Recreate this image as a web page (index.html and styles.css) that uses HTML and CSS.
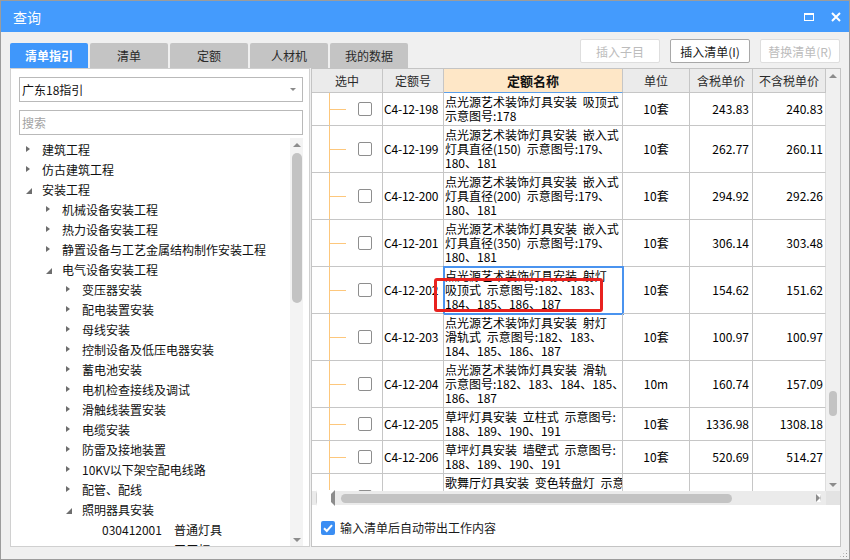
FILE: index.html
```html
<!DOCTYPE html>
<html lang="zh-CN">
<head>
<meta charset="UTF-8">
<title>查询</title>
<link rel="stylesheet" href="styles.css">
</head>
<body>
    <div class="window">
        <div class="titlebar">
            <span class="title">查询</span>
            <span class="win-btn"><span class="max-icon"></span></span>
            <span class="win-btn">
                <svg width="10" height="10" viewBox="0 0 10 10"><path d="M1 1 L9 9 M9 1 L1 9" stroke="#fff" stroke-width="2"/></svg>
            </span>
        </div>

        <div class="toolbar">
            <div class="tabs">
                <div class="tab on">清单指引</div>
                <div class="tab">清单</div>
                <div class="tab">定额</div>
                <div class="tab">人材机</div>
                <div class="tab">我的数据</div>
            </div>
            <div class="actions">
                <div class="btn">插入子目</div>
                <div class="btn on">插入清单(I)</div>
                <div class="btn">替换清单(R)</div>
            </div>
        </div>

        <div class="main">
            <div class="left">
                <div class="select">
                    <span class="select-text">广东18指引</span>
                    <span class="caret"></span>
                </div>
                <div class="search">搜索</div>
                <div class="tree">
                    <div class="tree-list">
                        <div class="node l0"><span class="tw"><i class="shut"></i></span>建筑工程</div>
                        <div class="node l0"><span class="tw"><i class="shut"></i></span>仿古建筑工程</div>
                        <div class="node l0"><span class="tw"><i class="open"></i></span>安装工程</div>
                        <div class="node l1"><span class="tw"><i class="shut"></i></span>机械设备安装工程</div>
                        <div class="node l1"><span class="tw"><i class="shut"></i></span>热力设备安装工程</div>
                        <div class="node l1"><span class="tw"><i class="shut"></i></span>静置设备与工艺金属结构制作安装工程</div>
                        <div class="node l1"><span class="tw"><i class="open"></i></span>电气设备安装工程</div>
                        <div class="node l2"><span class="tw"><i class="shut"></i></span>变压器安装</div>
                        <div class="node l2"><span class="tw"><i class="shut"></i></span>配电装置安装</div>
                        <div class="node l2"><span class="tw"><i class="shut"></i></span>母线安装</div>
                        <div class="node l2"><span class="tw"><i class="shut"></i></span>控制设备及低压电器安装</div>
                        <div class="node l2"><span class="tw"><i class="shut"></i></span>蓄电池安装</div>
                        <div class="node l2"><span class="tw"><i class="shut"></i></span>电机检查接线及调试</div>
                        <div class="node l2"><span class="tw"><i class="shut"></i></span>滑触线装置安装</div>
                        <div class="node l2"><span class="tw"><i class="shut"></i></span>电缆安装</div>
                        <div class="node l2"><span class="tw"><i class="shut"></i></span>防雷及接地装置</div>
                        <div class="node l2"><span class="tw"><i class="shut"></i></span>10KV以下架空配电线路</div>
                        <div class="node l2"><span class="tw"><i class="shut"></i></span>配管、配线</div>
                        <div class="node l2"><span class="tw"><i class="open"></i></span>照明器具安装</div>
                        <div class="node l3"><span class="tw"></span><span class="leaf-code">030412001</span>普通灯具</div>
                        <div class="node l3"><span class="tw"></span><span class="leaf-code">030412002</span>工厂灯</div>
                    </div>
                    <div class="tree-scroll">
                        <span class="arr up"></span>
                        <div class="track"><div class="thumb"></div></div>
                        <span class="arr down"></span>
                    </div>
                </div>
            </div>

            <div class="right">
                <div class="grid-wrap">
                    <div class="grid-view">
                        <div class="row head">
                            <div class="c h">选中</div>
                            <div class="c h">定额号</div>
                            <div class="c h name-h">定额名称</div>
                            <div class="c h">单位</div>
                            <div class="c h">含税单价</div>
                            <div class="c h">不含税单价</div>
                        </div>
                        <div class="row">
                            <div class="c sel"><span class="box"></span></div>
                            <div class="c qcode">C4-12-198</div>
                            <div class="c name">点光源艺术装饰灯具安装 吸顶式<br>示意图号:178</div>
                            <div class="c unit">10套</div>
                            <div class="c num">243.83</div>
                            <div class="c num last">240.83</div>
                        </div>
                        <div class="row">
                            <div class="c sel"><span class="box"></span></div>
                            <div class="c qcode">C4-12-199</div>
                            <div class="c name">点光源艺术装饰灯具安装 嵌入式<br>灯具直径(150) 示意图号:179、<br>180、181</div>
                            <div class="c unit">10套</div>
                            <div class="c num">262.77</div>
                            <div class="c num last">260.11</div>
                        </div>
                        <div class="row">
                            <div class="c sel"><span class="box"></span></div>
                            <div class="c qcode">C4-12-200</div>
                            <div class="c name">点光源艺术装饰灯具安装 嵌入式<br>灯具直径(200) 示意图号:179、<br>180、181</div>
                            <div class="c unit">10套</div>
                            <div class="c num">294.92</div>
                            <div class="c num last">292.26</div>
                        </div>
                        <div class="row">
                            <div class="c sel"><span class="box"></span></div>
                            <div class="c qcode">C4-12-201</div>
                            <div class="c name">点光源艺术装饰灯具安装 嵌入式<br>灯具直径(350) 示意图号:179、<br>180、181</div>
                            <div class="c unit">10套</div>
                            <div class="c num">306.14</div>
                            <div class="c num last">303.48</div>
                        </div>
                        <div class="row">
                            <div class="c sel"><span class="box"></span></div>
                            <div class="c qcode">C4-12-202</div>
                            <div class="c name cur">点光源艺术装饰灯具安装 射灯<br>吸顶式 示意图号:182、183、<br>184、185、186、187</div>
                            <div class="c unit">10套</div>
                            <div class="c num">154.62</div>
                            <div class="c num last">151.62</div>
                        </div>
                        <div class="row">
                            <div class="c sel"><span class="box"></span></div>
                            <div class="c qcode">C4-12-203</div>
                            <div class="c name">点光源艺术装饰灯具安装 射灯<br>滑轨式 示意图号:182、183、<br>184、185、186、187</div>
                            <div class="c unit">10套</div>
                            <div class="c num">100.97</div>
                            <div class="c num last">100.97</div>
                        </div>
                        <div class="row">
                            <div class="c sel"><span class="box"></span></div>
                            <div class="c qcode">C4-12-204</div>
                            <div class="c name">点光源艺术装饰灯具安装 滑轨<br>示意图号:182、183、184、185、<br>186、187</div>
                            <div class="c unit">10m</div>
                            <div class="c num">160.74</div>
                            <div class="c num last">157.09</div>
                        </div>
                        <div class="row">
                            <div class="c sel"><span class="box"></span></div>
                            <div class="c qcode">C4-12-205</div>
                            <div class="c name">草坪灯具安装 立柱式 示意图号:<br>188、189、190、191</div>
                            <div class="c unit">10套</div>
                            <div class="c num">1336.98</div>
                            <div class="c num last">1308.18</div>
                        </div>
                        <div class="row">
                            <div class="c sel"><span class="box"></span></div>
                            <div class="c qcode">C4-12-206</div>
                            <div class="c name">草坪灯具安装 墙壁式 示意图号:<br>188、189、190、191</div>
                            <div class="c unit">10套</div>
                            <div class="c num">520.69</div>
                            <div class="c num last">514.27</div>
                        </div>
                        <div class="row">
                            <div class="c sel"><span class="box"></span></div>
                            <div class="c qcode">C4-12-207</div>
                            <div class="c name">歌舞厅灯具安装 变色转盘灯 示意<br>图号:192、193<br>&nbsp;</div>
                            <div class="c unit">10套</div>
                            <div class="c num">977.8</div>
                            <div class="c num last">973.26</div>
                        </div>
                    </div>
                    <div class="vscroll">
                        <span class="arr up"></span>
                        <div class="track"><div class="vthumb"></div></div>
                        <span class="arr down"></span>
                    </div>
                </div>
                <div class="hscroll">
                    <div class="hbar">
                        <span class="harr left"></span>
                        <div class="hthumb"></div>
                        <span class="harr right"></span>
                    </div>
                    <div class="corner"></div>
                </div>
                <div class="bottom">
                    <span class="check">
                        <svg width="14" height="14" viewBox="0 0 14 14"><path d="M3 7.2 L5.8 10 L11 4.2" fill="none" stroke="#fff" stroke-width="2"/></svg>
                    </span>
                    <span class="check-label">输入清单后自动带出工作内容</span>
                </div>
                <div class="mark"></div>
            </div>
        </div>

        <div class="footer"><span class="grip"></span></div>
    </div>
</body>
</html>
```

FILE: styles.css
```css
body, html {
    margin: 0;
    padding: 0;
}

body {
    font-family: "Noto Sans CJK SC", "Liberation Sans", sans-serif;
    font-size: 12px;
    color: #111;
}

.window {
    width: 850px;
    height: 560px;
    box-sizing: border-box;
    border: 1px solid #9c9c9c;
    background: #f0f0f0;
    display: flex;
    flex-direction: column;
    overflow: hidden;
}

.titlebar {
    flex: none;
    height: 31px;
    background: #449bfd;
    color: #fff;
    display: flex;
    align-items: center;
    padding: 0 4px 0 12px;
    font-size: 14px;
}

.title {
    flex: 1;
}

.win-btn {
    width: 18px;
    height: 18px;
    margin-left: 9px;
    display: flex;
    align-items: center;
    justify-content: center;
}

.max-icon {
    width: 10px;
    height: 8px;
    box-sizing: border-box;
    border: 1.5px solid #fff;
    border-top-width: 2.5px;
}

.toolbar {
    flex: none;
    height: 36px;
    display: flex;
    justify-content: space-between;
    padding: 0 9px 0 9px;
}

.tabs {
    display: flex;
    gap: 2px;
    align-self: flex-end;
}

.tab {
    width: 78px;
    height: 25px;
    line-height: 25px;
    text-align: center;
    background: #c4c4c4;
    color: #2a2a2a;
    border-radius: 2px 2px 0 0;
}

.tab.on {
    background: #3f97fb;
    color: #fff;
    font-weight: bold;
}

.actions {
    display: flex;
    gap: 10px;
    padding-top: 7px;
}

.btn {
    width: 80px;
    height: 24px;
    box-sizing: border-box;
    border: 1px solid #dedede;
    border-radius: 2px;
    background: #fff;
    color: #bcbcbc;
    display: flex;
    align-items: center;
    justify-content: center;
}

.btn.on {
    border-color: #a8a8a8;
    color: #1a1a1a;
}

.main {
    flex: none;
    height: 479px;
    display: flex;
    gap: 1px;
    padding: 0 8px 0 9px;
}

/* left: guide tree */
.left {
    width: 300px;
    box-sizing: border-box;
    border: 1px solid #d0d0d0;
    background: #fff;
    padding: 8px 6px 0 8px;
    display: flex;
    flex-direction: column;
}

.select, .search {
    flex: none;
    height: 25px;
    box-sizing: border-box;
    border: 1px solid #b9b9b9;
    display: flex;
    align-items: center;
    padding: 0 6px 0 2px;
}

.select-text {
    flex: 1;
}

.caret {
    width: 0;
    height: 0;
    border-left: 3px solid transparent;
    border-right: 3px solid transparent;
    border-top: 3px solid #8a8a8a;
}

.search {
    margin-top: 8px;
    color: #a3a3a3;
}

.tree {
    flex: 1;
    min-height: 0;
    display: flex;
    margin-top: 3px;
}

.tree-list {
    flex: 1;
    overflow: hidden;
    padding-top: 1px;
}

.node {
    height: 20px;
    display: flex;
    align-items: center;
    white-space: nowrap;
}

.l0 { padding-left: 7px; }
.l1 { padding-left: 27px; }
.l2 { padding-left: 47px; }
.l3 { padding-left: 67px; }

.tw {
    flex: none;
    width: 16px;
    height: 20px;
    display: flex;
    align-items: center;
}

.shut {
    width: 0;
    height: 0;
    border-left: 4px solid #6e6e6e;
    border-top: 3.5px solid transparent;
    border-bottom: 3.5px solid transparent;
}

.open {
    width: 0;
    height: 0;
    border-bottom: 6px solid #6e6e6e;
    border-left: 6px solid transparent;
    margin-top: 3px;
}

.leaf-code {
    margin-right: 12px;
}

.tree-scroll, .vscroll {
    flex: none;
    width: 13px;
    background: #f3f3f3;
    display: flex;
    flex-direction: column;
    align-items: center;
}

.arr {
    flex: none;
    width: 0;
    height: 0;
    border-left: 4px solid transparent;
    border-right: 4px solid transparent;
}

.arr.up {
    border-bottom: 4px solid #8c8c8c;
    margin: 5px 0 4px;
}

.arr.down {
    border-top: 4px solid #8c8c8c;
    margin: 4px 0 4px;
}

.track {
    flex: 1;
    min-height: 0;
}

.thumb {
    width: 10px;
    height: 150px;
    margin-top: 2px;
    border-radius: 5px;
    background: #c3c3c3;
}

/* right: quota grid */
.right {
    position: relative;
    width: 530px;
    box-sizing: border-box;
    border: 1px solid #c4c4c4;
    background: #fff;
    display: flex;
    flex-direction: column;
}

.grid-wrap {
    flex: none;
    height: 422px;
    display: flex;
}

.grid-view {
    width: 514px;
    overflow: hidden;
}

.row {
    display: grid;
    grid-template-columns: 71px 61px 179px 67px 63px 73px;
}

.c {
    box-sizing: border-box;
    border-right: 1px solid #c6c6c6;
    border-bottom: 1px solid #c6c6c6;
    display: flex;
    align-items: center;
    overflow: hidden;
    white-space: nowrap;
    line-height: 14px;
    color: #000;
}

.h {
    justify-content: center;
    background: #ebebeb;
    line-height: 19px;
    padding: 2px 0;
    color: #2a2a2a;
}

.name-h {
    background: #fee7c7;
    font-size: 13px;
    font-weight: bold;
    color: #111;
    border-bottom-color: #5b9fea;
}

.sel {
    padding-left: 46px;
    background:
        linear-gradient(#fdc77c, #fdc77c) 17px 0 / 1px 100% no-repeat,
        linear-gradient(#fdc77c, #fdc77c) 17px 50% / 17px 1px no-repeat;
}

.box {
    width: 14px;
    height: 14px;
    box-sizing: border-box;
    border: 1px solid #8e8e8e;
    border-radius: 2px;
    background: #fff;
}

.qcode {
    padding: 0 1px;
    letter-spacing: -0.2px;
}

.name {
    display: block;
    padding: 2px 1px 2px 1px;
    word-spacing: 3px;
}

.name.cur {
    outline: 2px solid #4a93ef;
    outline-offset: -1px;
}

.unit {
    justify-content: center;
}

.num {
    justify-content: flex-end;
    padding-right: 3px;
}

.num.last {
    padding-right: 2px;
    border-right-color: #dedede;
}

.vscroll {
    width: 14px;
    background: #f0f0f0;
}

.vthumb {
    width: 8px;
    height: 25px;
    margin-top: 309px;
    border-radius: 4px;
    background: #c3c3c3;
}

.hscroll {
    flex: none;
    height: 14px;
    display: flex;
}

.hbar {
    width: 514px;
    background: #ebebeb;
    display: flex;
    align-items: center;
}

.harr {
    width: 0;
    height: 0;
    border-top: 4px solid transparent;
    border-bottom: 4px solid transparent;
}

.harr.left {
    border-right: 4px solid #8c8c8c;
    margin: 0 6px 0 4px;
}

.harr.right {
    border-left: 4px solid #8c8c8c;
    margin-left: 84px;
}

.hthumb {
    width: 391px;
    height: 9px;
    border-radius: 5px;
    background: #c3c3c3;
}

.corner {
    flex: 1;
    background: #e3e3e3;
}

.bottom {
    flex: 1;
    display: flex;
    align-items: center;
    padding: 4px 0 0 9px;
}

.check {
    width: 14px;
    height: 14px;
    border-radius: 2px;
    background: #3b8ef3;
    display: flex;
}

.check-label {
    margin-left: 5px;
    color: #1a1a1a;
}

/* review mark drawn over the selected cell */
.mark {
    position: absolute;
    left: 122px;
    top: 209px;
    width: 169px;
    height: 34px;
    box-sizing: border-box;
    border: 3px solid #e8221f;
    border-radius: 3px;
}

.footer {
    flex: 1;
    display: flex;
    justify-content: flex-end;
    align-items: flex-end;
    padding: 0 1px 1px 0;
}

.grip {
    width: 9px;
    height: 9px;
    background: radial-gradient(circle, #9a9a9a 0.8px, transparent 1px) 0 0 / 3px 3px;
    clip-path: polygon(100% 0, 100% 100%, 0 100%);
}
```
